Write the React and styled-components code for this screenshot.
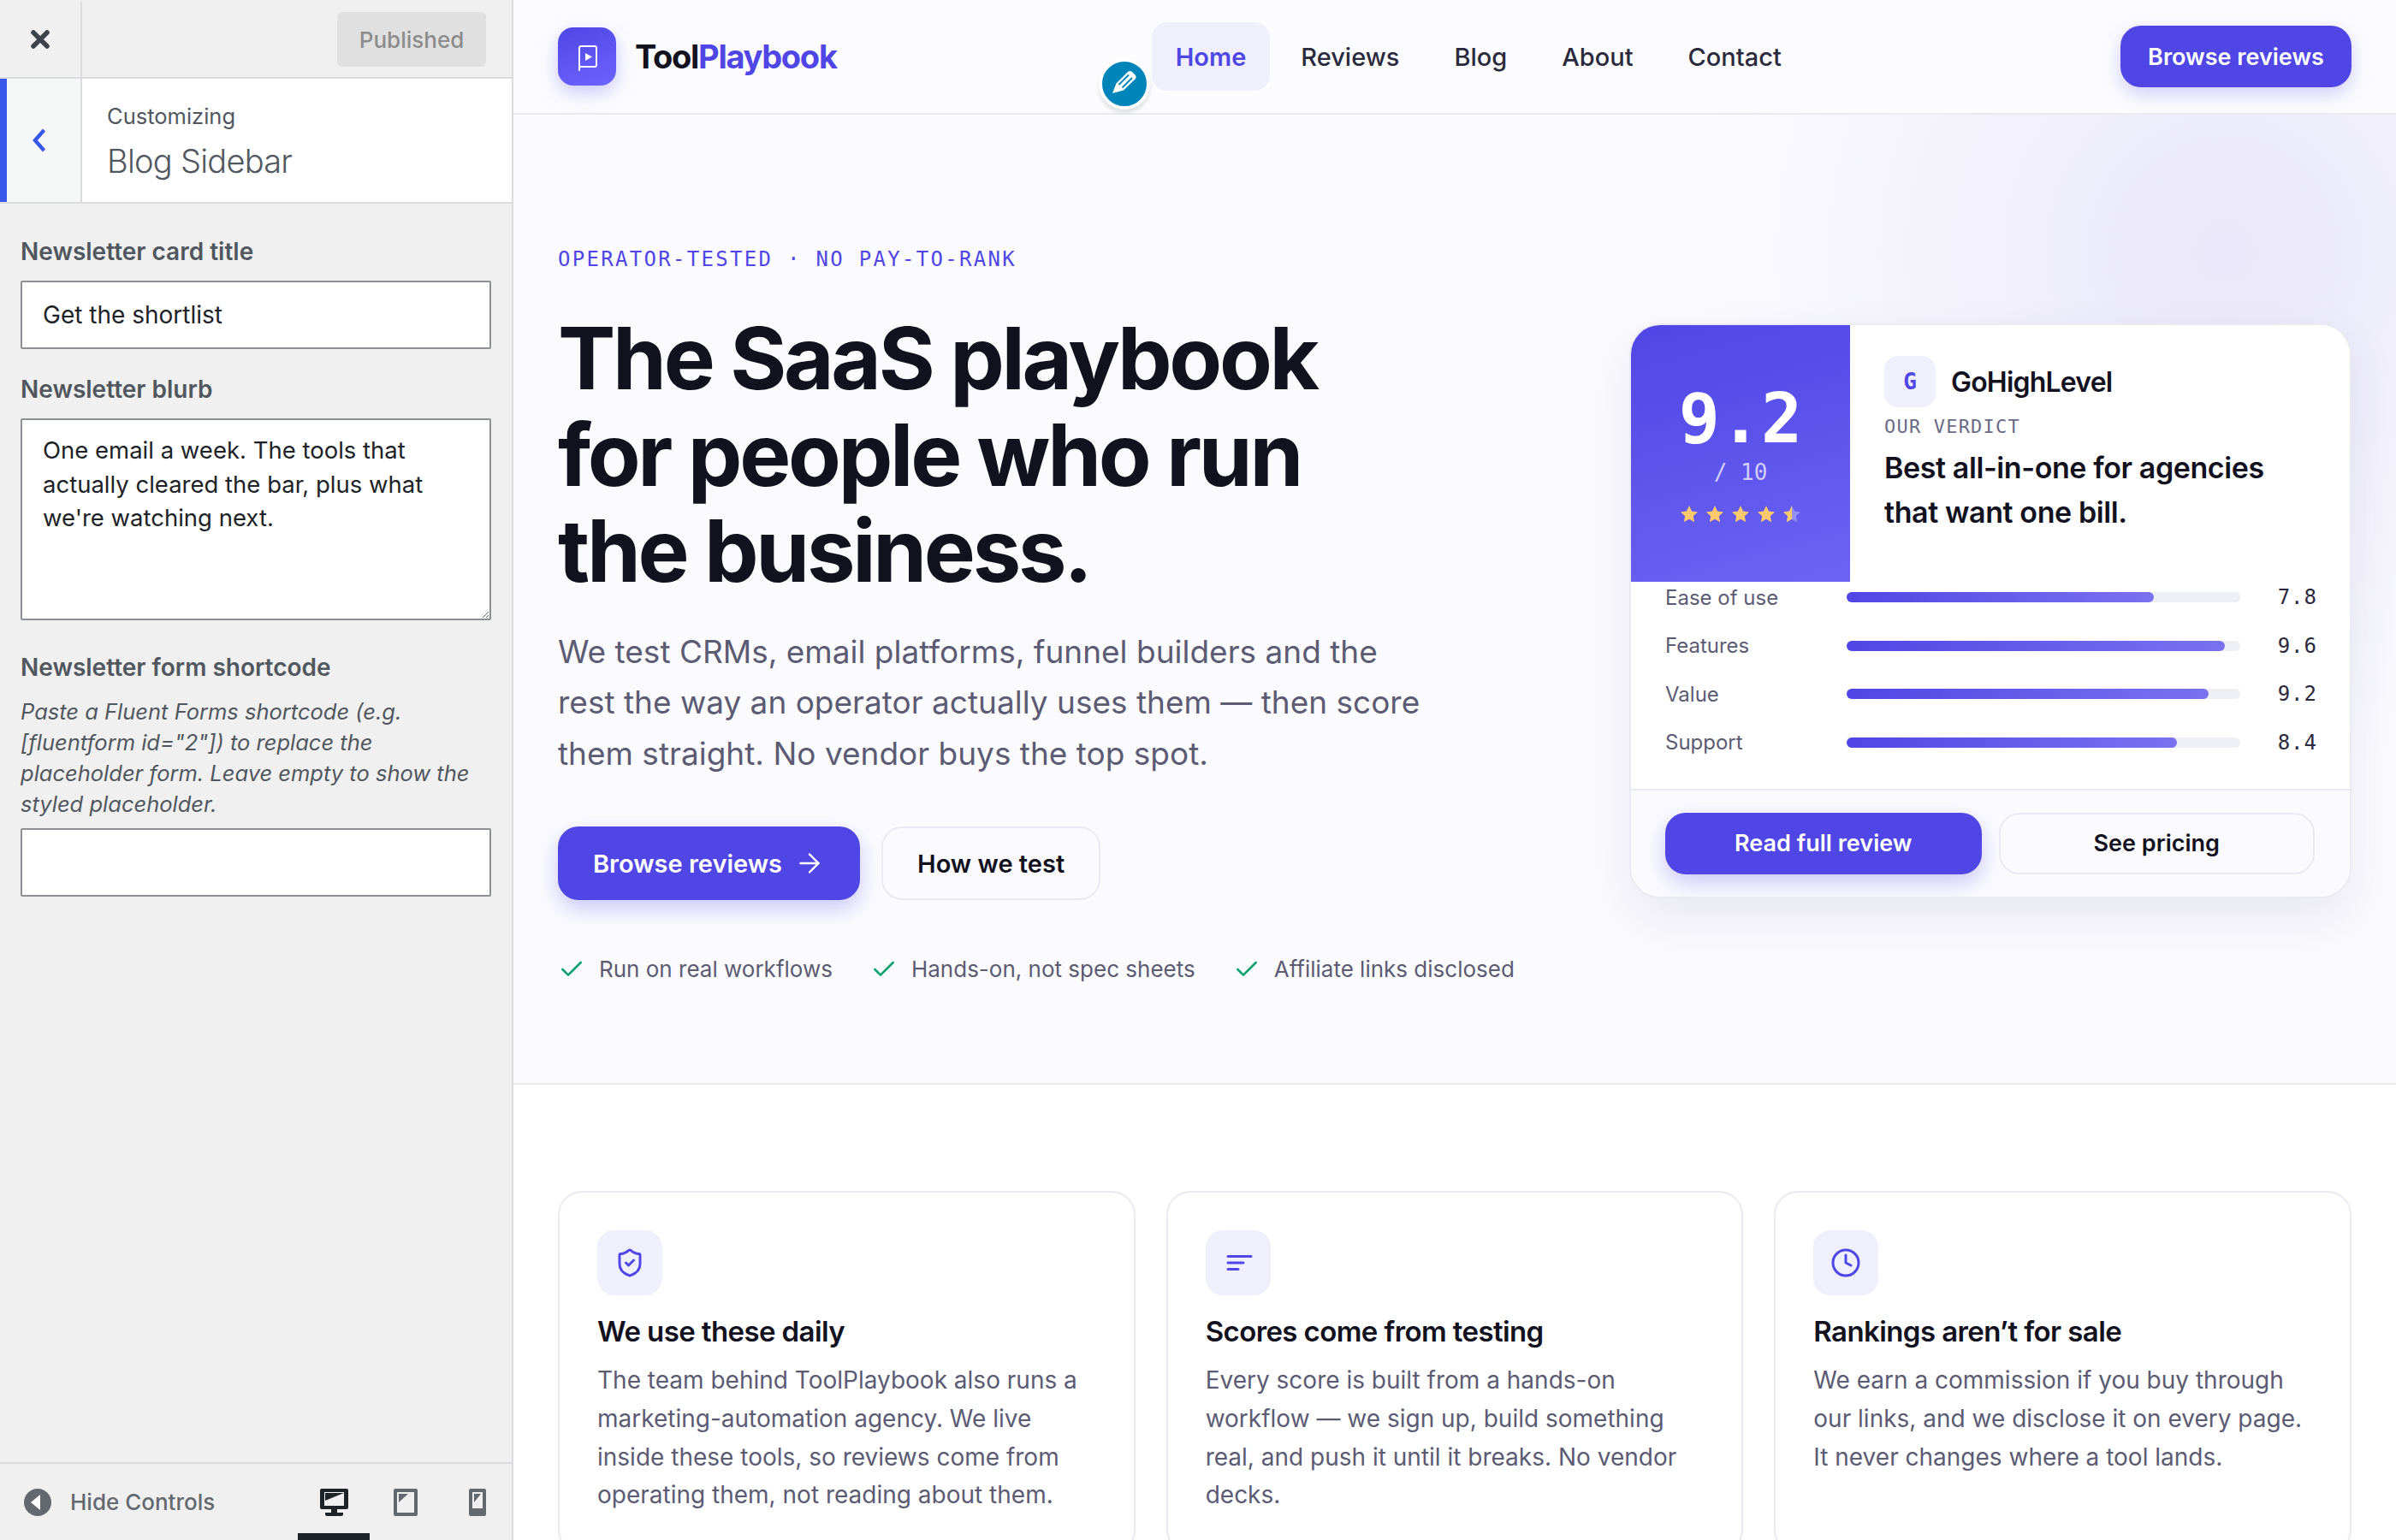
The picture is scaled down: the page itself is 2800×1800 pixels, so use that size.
import React from "react";
import styled, { createGlobalStyle } from "styled-components";
import { ArrowRight, Check, Clock, ShieldCheck } from "lucide-react";

const BODY = `Inter, "Liberation Sans", sans-serif`;
const MONO = `"DejaVu Sans Mono", "Liberation Mono", monospace`;
const INDIGO = "#4f46e5";
const INK = "#12121f";
const MUTED = "#5b5b73";
const LINE = "#eaeaf2";

const GlobalStyle = createGlobalStyle`
  html, body {
    margin: 0;
    padding: 0;
    overflow: hidden;
    background: #fff;
    font-family: ${BODY};
  }
  * {
    box-sizing: border-box;
  }
`;

const Shell = styled.div`
  display: flex;
  width: 2800px;
  height: 1800px;
  overflow: hidden;
`;

/* customizer panel */

const Sidebar = styled.aside`
  display: flex;
  flex-direction: column;
  flex: 0 0 600px;
  min-width: 0;
  height: 1800px;
  overflow: hidden;
  background: #f0f0f1;
  border-right: 2px solid #dcdcde;
  color: #50575e;
`;

const PanelTop = styled.div`
  display: flex;
  align-items: center;
  justify-content: space-between;
  height: 92px;
  border-bottom: 2px solid #dcdcde;
  padding: 2px 30px 0 0;
`;

const CloseButton = styled.div`
  display: flex;
  align-items: center;
  justify-content: center;
  width: 96px;
  height: 100%;
  border-right: 2px solid #dcdcde;
`;

const PublishedButton = styled.div`
  display: flex;
  align-items: center;
  justify-content: center;
  width: 174px;
  height: 64px;
  border-radius: 6px;
  background: #e0e0e0;
  color: #8c8c8c;
  font-size: 26px;
  font-weight: 500;
`;

const SectionTitle = styled.div`
  display: flex;
  height: 146px;
  flex: 0 0 146px;
  background: #fff;
  border-bottom: 2px solid #dcdcde;
`;

const BackButton = styled.div`
  display: flex;
  align-items: center;
  justify-content: center;
  width: 96px;
  padding-right: 10px;
  background: #f6f7f7;
  border-left: 8px solid #3858e9;
  border-right: 2px solid #dcdcde;
`;

const SectionText = styled.div`
  display: flex;
  flex-direction: column;
  padding: 26px 0 0 29px;
`;

const Customizing = styled.span`
  font-size: 25.5px;
  line-height: 36px;
  color: #50575e;
`;

const SectionName = styled.span`
  margin-top: 7px;
  font-size: 38px;
  line-height: 54px;
  font-weight: 300;
  color: #50575e;
  letter-spacing: -0.75px;
`;

const Controls = styled.div`
  flex: 1;
  padding: 38px 24px 0;
`;

const Field = styled.div`
  margin-bottom: 29px;
`;

const FieldLabel = styled.label`
  display: block;
  margin-bottom: 16px;
  font-size: 28px;
  line-height: 36px;
  font-weight: 600;
  color: #50575e;
`;

const FieldHint = styled.p`
  margin: 0 0 10px;
  font-size: 25.5px;
  line-height: 36px;
  font-style: italic;
  color: #50575e;
`;

const TextField = styled.input`
  display: block;
  width: 100%;
  height: 80px;
  padding: 0 24px;
  border: 2px solid #8c8f94;
  border-radius: 2px;
  background: #fff;
  color: #1d2327;
  font-family: ${BODY};
  font-size: 28px;
  outline: none;
`;

const TextBox = styled.textarea`
  display: block;
  width: 100%;
  height: 236px;
  margin-bottom: 37px;
  padding: 16px 24px;
  border: 2px solid #8c8f94;
  border-radius: 2px;
  background: #fff;
  color: #1d2327;
  font-family: ${BODY};
  font-size: 27.5px;
  line-height: 39.5px;
  outline: none;
`;

const PanelFooter = styled.div`
  display: flex;
  align-items: center;
  height: 91px;
  flex: 0 0 91px;
  border-top: 2px solid #dcdcde;
  padding-left: 28px;
`;

const HideControls = styled.div`
  display: flex;
  align-items: center;
  flex: 0 0 320px;
  gap: 22px;
  font-size: 26px;
  font-weight: 500;
  color: #646970;
`;

const DeviceTab = styled.div`
  display: flex;
  align-items: center;
  justify-content: center;
  flex: 0 0 ${(p) => p.$width}px;
  height: 89px;
  padding-top: 9px;
  border-bottom: 8px solid ${(p) => (p.$active ? "#1d2327" : "transparent")};
`;

/* site preview */

const Preview = styled.main`
  flex: 1;
  min-width: 0;
  height: 1800px;
  overflow: hidden;
  background: #fff;
`;

const SiteHeader = styled.header`
  position: relative;
  display: flex;
  align-items: center;
  justify-content: space-between;
  height: 134px;
  padding: 0 52px;
  background: #fcfcfe;
  border-bottom: 2px solid ${LINE};
`;

const Brand = styled.div`
  display: flex;
  align-items: center;
  gap: 22px;
`;

const BrandMark = styled.div`
  display: flex;
  align-items: center;
  justify-content: center;
  width: 68px;
  height: 68px;
  border-radius: 18px;
  background: linear-gradient(160deg, #4f46e5, #6c63ff);
  box-shadow: 0 8px 22px rgba(79, 70, 229, 0.28);
`;

const BrandName = styled.div`
  font-size: 38px;
  font-weight: 700;
  letter-spacing: -1.3px;
  color: ${INK};

  span {
    color: ${INDIGO};
  }
`;

const EditBadge = styled.div`
  position: absolute;
  left: 684px;
  top: 68px;
  display: flex;
  align-items: center;
  justify-content: center;
  width: 60px;
  height: 60px;
  border: 4px solid #fff;
  border-radius: 50%;
  background: #0085ba;
  box-shadow: 0 4px 4px rgba(60, 67, 74, 0.15);
`;

const Nav = styled.nav`
  display: flex;
  align-items: center;
  gap: 8px;
`;

const NavItem = styled.a`
  display: flex;
  align-items: center;
  height: 80px;
  padding: 0 28px;
  border-radius: 18px;
  font-size: 29px;
  font-weight: ${(p) => (p.$active ? 600 : 500)};
  color: ${(p) => (p.$active ? INDIGO : "#2a2a3c")};
  background: ${(p) => (p.$active ? "#eff0fc" : "transparent")};
`;

const HeaderCta = styled.a`
  display: flex;
  align-items: center;
  justify-content: center;
  width: 270px;
  height: 72px;
  border-radius: 24px;
  background: ${INDIGO};
  color: #fff;
  font-size: 27px;
  font-weight: 600;
  box-shadow: 0 8px 22px rgba(79, 70, 229, 0.25);
`;

const Hero = styled.section`
  display: grid;
  grid-template-columns: 1fr 844px;
  align-items: start;
  height: 1134px;
  padding: 152px 52px 112px;
  background: radial-gradient(circle 620px at 2000px 160px, #e9e7f9 0%, #f3f2fc 50%, #fbfbfe 100%), #fbfbfe;
  border-bottom: 2px solid ${LINE};
`;

const HeroCopy = styled.div`
  display: flex;
  flex-direction: column;
  align-items: flex-start;
`;

const Eyebrow = styled.div`
  font-family: ${MONO};
  font-size: 24px;
  line-height: 34px;
  letter-spacing: 2.3px;
  color: ${INDIGO};
`;

const HeroTitle = styled.h1`
  margin: 42px 0 0;
  font-size: 101px;
  line-height: 112.5px;
  font-weight: 700;
  letter-spacing: -3.3px;
  color: ${INK};
`;

const HeroText = styled.p`
  margin: 32px 0 0;
  font-size: 37px;
  line-height: 59.5px;
  color: ${MUTED};
`;

const HeroActions = styled.div`
  display: flex;
  gap: 25px;
  margin-top: 56px;
`;

const PrimaryButton = styled.a`
  display: flex;
  align-items: center;
  justify-content: center;
  gap: 14px;
  height: ${(p) => p.$height}px;
  padding: 0 ${(p) => p.$pad}px;
  border-radius: 24px;
  background: ${INDIGO};
  color: #fff;
  font-size: ${(p) => p.$size}px;
  font-weight: 600;
  box-shadow: 0 10px 26px rgba(79, 70, 229, 0.28);
`;

const GhostButton = styled.a`
  display: flex;
  align-items: center;
  justify-content: center;
  height: ${(p) => p.$height}px;
  padding: 0 ${(p) => p.$pad}px;
  border: 2px solid ${LINE};
  border-radius: 24px;
  background: #fbfbfe;
  color: ${INK};
  font-size: ${(p) => p.$size}px;
  font-weight: 600;
`;

const TrustRow = styled.ul`
  display: flex;
  gap: 44px;
  margin: 63px 0 0;
  padding: 0;
  list-style: none;
`;

const TrustItem = styled.li`
  display: flex;
  align-items: center;
  gap: 16px;
  font-size: 26px;
  line-height: 36px;
  color: ${MUTED};
`;

/* verdict card */

const VerdictCard = styled.div`
  margin-top: 92px;
  overflow: hidden;
  border: 2px solid ${LINE};
  border-radius: 36px;
  background: #fff;
  box-shadow: 0 24px 60px rgba(40, 36, 110, 0.09);
`;

const VerdictTop = styled.div`
  display: grid;
  grid-template-columns: 256px 1fr;
  height: 300px;
`;

const ScorePanel = styled.div`
  display: flex;
  flex-direction: column;
  align-items: center;
  padding-top: 62px;
  background: linear-gradient(165deg, #4f46e5, #6c63f5);
  color: #fff;
`;

const ScoreValue = styled.div`
  font-family: ${MONO};
  font-size: 80px;
  line-height: 96px;
  font-weight: 700;
`;

const ScoreOutOf = styled.div`
  margin-top: -3px;
  font-family: ${MONO};
  font-size: 26px;
  line-height: 34px;
  color: rgba(255, 255, 255, 0.72);
`;

const StarRow = styled.div`
  display: flex;
  gap: 10px;
  margin-top: 22px;
`;

const VerdictBody = styled.div`
  padding: 36px 30px 0 40px;
`;

const ToolRow = styled.div`
  display: flex;
  align-items: center;
  gap: 18px;
`;

const ToolBadge = styled.div`
  display: flex;
  align-items: center;
  justify-content: center;
  width: 60px;
  height: 60px;
  border-radius: 16px;
  background: #eff0fc;
  color: ${INDIGO};
  font-family: ${MONO};
  font-size: 26px;
  font-weight: 700;
`;

const ToolName = styled.div`
  font-size: 32px;
  font-weight: 600;
  letter-spacing: -0.8px;
  color: ${INK};
`;

const VerdictLabel = styled.div`
  margin-top: 8px;
  font-family: ${MONO};
  font-size: 22px;
  line-height: 30px;
  letter-spacing: 1.2px;
  color: #6b6b85;
`;

const VerdictText = styled.div`
  margin-top: 7px;
  font-size: 34px;
  line-height: 52px;
  font-weight: 600;
  letter-spacing: -0.4px;
  color: ${INK};
`;

const ScoreRows = styled.div`
  display: flex;
  flex-direction: column;
  gap: 20.5px;
  padding: 0 38px 36px 40px;
  border-bottom: 2px solid ${LINE};
`;

const ScoreRow = styled.div`
  display: grid;
  grid-template-columns: 212px 460px 1fr;
  align-items: center;
  height: 36px;
`;

const ScoreLabel = styled.span`
  font-size: 24px;
  color: ${MUTED};
`;

const Track = styled.div`
  height: 12px;
  border-radius: 6px;
  background: #eeeff4;
`;

const Fill = styled.div`
  height: 100%;
  border-radius: 6px;
  background: linear-gradient(90deg, #4f46e5, #7a71f0);
`;

const ScoreNumber = styled.span`
  justify-self: end;
  font-family: ${MONO};
  font-size: 24px;
  letter-spacing: 1px;
  color: #2a2a3c;
`;

const VerdictActions = styled.div`
  display: grid;
  grid-template-columns: 1fr 1fr;
  gap: 20px;
  padding: 26px 41px 26px 40px;
  background: #fbfbfe;
`;

/* feature cards */

const Features = styled.section`
  display: grid;
  grid-template-columns: repeat(3, 1fr);
  gap: 36px;
  padding: 124px 52px 0;
  background: #fff;
`;

const FeatureCard = styled.article`
  padding: 44px;
  border: 2px solid ${LINE};
  border-radius: 28px;
  background: #fff;
`;

const FeatureIcon = styled.div`
  display: flex;
  align-items: center;
  justify-content: center;
  width: 76px;
  height: 76px;
  border-radius: 20px;
  background: #eff0fc;
  color: ${INDIGO};
`;

const FeatureTitle = styled.h3`
  margin: 20px 0 0;
  font-size: 33px;
  line-height: 44px;
  font-weight: 600;
  letter-spacing: -0.6px;
  color: ${INK};
`;

const FeatureText = styled.p`
  margin: 13px 0 0;
  font-size: 28px;
  line-height: 44.8px;
  color: ${MUTED};
`;

const LogoMark = () => (
  <svg width="68" height="68" viewBox="0 0 68 68" fill="none">
    <path
      d="M25 50V24a2 2 0 0 1 2-2h16a2 2 0 0 1 2 2v20a2 2 0 0 1-2 2H27a2 2 0 0 0-2 2"
      stroke="#fff"
      strokeWidth="2"
      strokeLinecap="round"
    />
    <path d="M32 30l8 4.5-8 4.5z" fill="#fff" />
  </svg>
);

const PencilMark = () => (
  <svg width="52" height="52" viewBox="8 8 52 52">
    <path
      d="M20 45l4.5-11.5L38 20c1.5-1.5 3.5-1.5 5 0l3.5 3.5c1.5 1.5 1.5 3.5 0 5L33 41.5z"
      fill="#fff"
    />
    <path d="M27.5 35L39 23.5M31.5 38.5L43 27" stroke="#0085ba" strokeWidth="1.8" />
  </svg>
);

const CloseMark = () => (
  <svg width="22" height="22" viewBox="0 0 22 22">
    <path d="M3 3l16 16M19 3L3 19" stroke="#3c434a" strokeWidth="5.5" strokeLinecap="round" />
  </svg>
);

const BackMark = () => (
  <svg width="16" height="28" viewBox="0 0 16 28" fill="none">
    <path d="M13.5 2L3 14l10.5 12" stroke="#3858e9" strokeWidth="4.4" />
  </svg>
);

const HideMark = () => (
  <svg width="32" height="32" viewBox="0 0 32 32">
    <circle cx="16" cy="16" r="16" fill="#646970" />
    <path d="M8 16l11-9v18z" fill="#fff" />
  </svg>
);

const DesktopMark = () => (
  <svg width="33" height="32" viewBox="0 0 33 32">
    <rect width="33" height="24" rx="2" fill="#1d2327" />
    <rect x="5" y="4" width="23" height="16" fill="#f0f0f1" />
    <path d="M6 5h22L6 14z" fill="#1d2327" />
    <path d="M13 23h7v5h7v2a2 2 0 0 1-2 2H8a2 2 0 0 1-2-2v-2h7z" fill="#1d2327" />
  </svg>
);

const TabletMark = () => (
  <svg width="28" height="32" viewBox="0 0 28 32">
    <rect width="28" height="32" rx="2" fill="#646970" />
    <rect x="4" y="4" width="20" height="24" fill="#f0f0f1" />
    <path d="M6 6h11L6 16z" fill="#646970" />
  </svg>
);

const MobileMark = () => (
  <svg width="20" height="32" viewBox="0 0 20 32">
    <rect width="20" height="32" rx="2" fill="#646970" />
    <rect x="4" y="4" width="12" height="19" fill="#f0f0f1" />
    <path d="M6 6h8l-8 10z" fill="#646970" />
  </svg>
);

const LinesMark = () => (
  <svg width="36" height="36" viewBox="0 0 24 24" fill="none" stroke="currentColor" strokeWidth="2" strokeLinecap="round">
    <path d="M4 7h18M4 12h12M4 17h8" />
  </svg>
);

const STAR = "M10 0l3 6.6 7 .8-5.2 4.8 1.4 7.1L10 15.8l-6.2 3.5 1.4-7.1L0 7.4l7-.8z";

const Star = ({ half }) => (
  <svg width="20" height="20" viewBox="0 0 20 20">
    <path d={STAR} fill={half ? "rgba(255,255,255,0.32)" : "#fdc96d"} />
    {half && <path d="M10 0L7 6.6l-7 .8 5.2 4.8-1.4 7.1 6.2-3.5z" fill="#fdc96d" />}
  </svg>
);

const NAV_ITEMS = ["Home", "Reviews", "Blog", "About", "Contact"];

const SCORES = [
  { label: "Ease of use", value: 7.8 },
  { label: "Features", value: 9.6 },
  { label: "Value", value: 9.2 },
  { label: "Support", value: 8.4 },
];

const TRUST = ["Run on real workflows", "Hands-on, not spec sheets", "Affiliate links disclosed"];

const FEATURES = [
  {
    icon: <ShieldCheck size={36} strokeWidth={2} />,
    title: "We use these daily",
    text: "The team behind ToolPlaybook also runs a marketing-automation agency. We live inside these tools, so reviews come from operating them, not reading about them.",
  },
  {
    icon: <LinesMark />,
    title: "Scores come from testing",
    text: "Every score is built from a hands-on workflow — we sign up, build something real, and push it until it breaks. No vendor decks.",
  },
  {
    icon: <Clock size={36} strokeWidth={2} />,
    title: "Rankings aren’t for sale",
    text: "We earn a commission if you buy through our links, and we disclose it on every page. It never changes where a tool lands.",
  },
];

const App = () => {
  return (
    <Shell>
      <GlobalStyle />
      <Sidebar>
        <PanelTop>
          <CloseButton>
            <CloseMark />
          </CloseButton>
          <PublishedButton>Published</PublishedButton>
        </PanelTop>
        <SectionTitle>
          <BackButton>
            <BackMark />
          </BackButton>
          <SectionText>
            <Customizing>Customizing</Customizing>
            <SectionName>Blog Sidebar</SectionName>
          </SectionText>
        </SectionTitle>
        <Controls>
          <Field>
            <FieldLabel>Newsletter card title</FieldLabel>
            <TextField readOnly value="Get the shortlist" />
          </Field>
          <Field>
            <FieldLabel>Newsletter blurb</FieldLabel>
            <TextBox
              readOnly
              value="One email a week. The tools that actually cleared the bar, plus what we're watching next."
            />
          </Field>
          <Field>
            <FieldLabel>Newsletter form shortcode</FieldLabel>
            <FieldHint>
              Paste a Fluent Forms shortcode (e.g. [fluentform id="2"]) to replace the placeholder form. Leave
              empty to show the styled placeholder.
            </FieldHint>
            <TextField readOnly value="" />
          </Field>
        </Controls>
        <PanelFooter>
          <HideControls>
            <HideMark />
            Hide Controls
          </HideControls>
          <DeviceTab $active $width={84}>
            <DesktopMark />
          </DeviceTab>
          <DeviceTab $width={84}>
            <TabletMark />
          </DeviceTab>
          <DeviceTab $width={84}>
            <MobileMark />
          </DeviceTab>
        </PanelFooter>
      </Sidebar>

      <Preview>
        <SiteHeader>
          <Brand>
            <BrandMark>
              <LogoMark />
            </BrandMark>
            <BrandName>
              Tool<span>Playbook</span>
            </BrandName>
          </Brand>
          <Nav>
            {NAV_ITEMS.map((item) => (
              <NavItem key={item} $active={item === "Home"}>
                {item}
              </NavItem>
            ))}
          </Nav>
          <HeaderCta>Browse reviews</HeaderCta>
          <EditBadge>
            <PencilMark />
          </EditBadge>
        </SiteHeader>

        <Hero>
          <HeroCopy>
            <Eyebrow>OPERATOR-TESTED · NO PAY-TO-RANK</Eyebrow>
            <HeroTitle>
              The SaaS playbook
              <br />
              for people who run
              <br />
              the business.
            </HeroTitle>
            <HeroText>
              We test CRMs, email platforms, funnel builders and the
              <br />
              rest the way an operator actually uses them — then score
              <br />
              them straight. No vendor buys the top spot.
            </HeroText>
            <HeroActions>
              <PrimaryButton $height={86} $pad={41} $size={29}>
                Browse reviews
                <ArrowRight size={36} strokeWidth={1.6} />
              </PrimaryButton>
              <GhostButton $height={86} $pad={40} $size={29}>
                How we test
              </GhostButton>
            </HeroActions>
            <TrustRow>
              {TRUST.map((item) => (
                <TrustItem key={item}>
                  <Check size={32} color="#10a36f" strokeWidth={2} />
                  {item}
                </TrustItem>
              ))}
            </TrustRow>
          </HeroCopy>

          <VerdictCard>
            <VerdictTop>
              <ScorePanel>
                <ScoreValue>9.2</ScoreValue>
                <ScoreOutOf>/ 10</ScoreOutOf>
                <StarRow>
                  <Star />
                  <Star />
                  <Star />
                  <Star />
                  <Star half />
                </StarRow>
              </ScorePanel>
              <VerdictBody>
                <ToolRow>
                  <ToolBadge>G</ToolBadge>
                  <ToolName>GoHighLevel</ToolName>
                </ToolRow>
                <VerdictLabel>OUR VERDICT</VerdictLabel>
                <VerdictText>
                  Best all-in-one for agencies
                  <br />
                  that want one bill.
                </VerdictText>
              </VerdictBody>
            </VerdictTop>
            <ScoreRows>
              {SCORES.map((row) => (
                <ScoreRow key={row.label}>
                  <ScoreLabel>{row.label}</ScoreLabel>
                  <Track>
                    <Fill style={{ width: `${row.value * 10}%` }} />
                  </Track>
                  <ScoreNumber>{row.value.toFixed(1)}</ScoreNumber>
                </ScoreRow>
              ))}
            </ScoreRows>
            <VerdictActions>
              <PrimaryButton $height={72} $pad={0} $size={27}>
                Read full review
              </PrimaryButton>
              <GhostButton $height={72} $pad={0} $size={27}>
                See pricing
              </GhostButton>
            </VerdictActions>
          </VerdictCard>
        </Hero>

        <Features>
          {FEATURES.map((feature) => (
            <FeatureCard key={feature.title}>
              <FeatureIcon>{feature.icon}</FeatureIcon>
              <FeatureTitle>{feature.title}</FeatureTitle>
              <FeatureText>{feature.text}</FeatureText>
            </FeatureCard>
          ))}
        </Features>
      </Preview>
    </Shell>
  );
};

export default App;
